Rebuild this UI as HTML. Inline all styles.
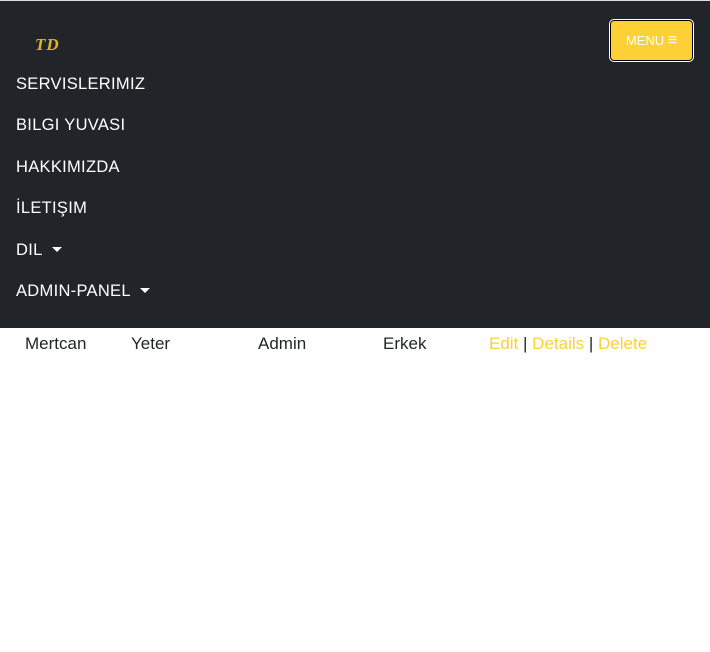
<!DOCTYPE html>
<html><head><style>
body{margin:0;width:710px;height:652px;background:#fff;font-family:"Liberation Sans",sans-serif;position:relative;overflow:hidden}
.nav{position:absolute;left:0;top:1px;width:710px;height:327px;background:#212529}
.top{position:absolute;top:0;left:0;width:710px;height:1px;background:#ddd}
.logo{position:absolute;left:35px;top:34px;color:#e0b51a;font-style:italic;font-weight:bold;font-size:17px;font-family:"Liberation Serif",serif;letter-spacing:1px}
.btn{position:absolute;left:609px;top:18px;width:83px;height:41px;border:1px solid #fff;border-radius:5px;background:#fdd036;box-shadow:inset 0 0 0 1px #000;color:#fff;font-size:13px;line-height:41px;text-align:center;box-sizing:content-box}
.item{position:absolute;left:16px;color:#fff;font-size:16.5px;letter-spacing:.3px}
.caret{display:inline-block;margin-left:9px;vertical-align:3px;border-left:5px solid transparent;border-right:5px solid transparent;border-top:5px solid #fff}
.row{position:absolute;top:334px;font-size:17px;color:#212529}
.y{color:#fdd036}
</style></head><body>
<div class="top"></div>
<div class="nav">
<div class="logo">TD</div>
<div class="btn">MENU <span style="font-size:16px">&#8801;</span></div>
<div class="item" style="top:74px">SERVISLERIMIZ</div>
<div class="item" style="top:115px">BILGI YUVASI</div>
<div class="item" style="top:157px">HAKKIMIZDA</div>
<div class="item" style="top:198px">İLETIŞIM</div>
<div class="item" style="top:240px">DIL<span class="caret"></span></div>
<div class="item" style="top:281px">ADMIN-PANEL<span class="caret"></span></div>
</div>
<div class="row" style="left:25px">Mertcan</div>
<div class="row" style="left:131px">Yeter</div>
<div class="row" style="left:258px">Admin</div>
<div class="row" style="left:383px">Erkek</div>
<div class="row" style="left:489px"><span class="y">Edit</span> | <span class="y">Details</span> | <span class="y">Delete</span></div>
</body></html>
